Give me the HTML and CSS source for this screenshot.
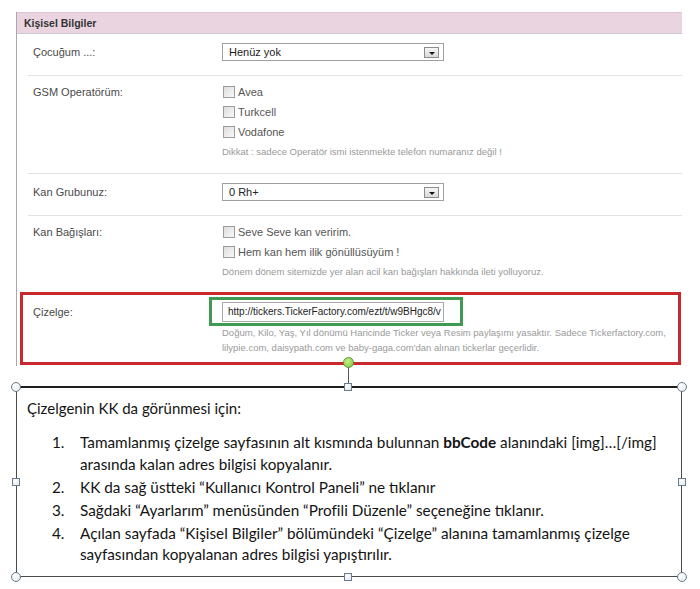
FILE: index.html
```html
<!DOCTYPE html>
<html lang="tr">
<head>
<meta charset="utf-8">
<title>Kişisel Bilgiler</title>
<link rel="stylesheet" href="styles.css">
</head>
<body>
<div class="page">
  <div class="panel">
    <div class="panel-head">Kişisel Bilgiler</div>

    <div class="row">
      <div class="lbl">Çocuğum ...:</div>
      <div class="fld">
        <div class="sel"><span class="sel-text">Henüz yok</span><span class="sel-btn"><i class="tri"></i></span></div>
      </div>
    </div>

    <div class="row multi">
      <div class="lbl">GSM Operatörüm:</div>
      <div class="fld">
        <div class="chk"><span class="box"></span><span>Avea</span></div>
        <div class="chk"><span class="box"></span><span>Turkcell</span></div>
        <div class="chk"><span class="box"></span><span>Vodafone</span></div>
        <div class="note">Dikkat : sadece Operatör ismi istenmekte telefon numaranız değil !</div>
      </div>
    </div>

    <div class="row">
      <div class="lbl">Kan Grubunuz:</div>
      <div class="fld">
        <div class="sel"><span class="sel-text">0 Rh+</span><span class="sel-btn"><i class="tri"></i></span></div>
      </div>
    </div>

    <div class="row multi last">
      <div class="lbl">Kan Bağışları:</div>
      <div class="fld">
        <div class="chk"><span class="box"></span><span>Seve Seve kan veririm.</span></div>
        <div class="chk"><span class="box"></span><span>Hem kan hem ilik gönüllüsüyüm !</span></div>
        <div class="note">Dönem dönem sitemizde yer alan acil kan bağışları hakkında ileti yolluyoruz.</div>
      </div>
    </div>

    <div class="redbox">
      <div class="lbl">Çizelge:</div>
      <div class="fld">
        <div class="inp-wrap">
          <div class="inp">http://tickers.TickerFactory.com/ezt/t/w9BHgc8/v</div>
          <div class="greenbox"></div>
        </div>
        <div class="hint">Doğum, Kilo, Yaş, Yıl dönümü Haricinde Ticker veya Resim paylaşımı yasaktır. Sadece Tickerfactory.com,<br>lilypie.com, daisypath.com ve baby-gaga.com'dan alınan tickerlar geçerlidir.</div>
      </div>
    </div>
  </div>

  <div class="rot-line"></div>
  <div class="rot-knob"></div>

  <div class="textbox">
    <div class="tb-title">Çizelgenin KK da görünmesi için:</div>
    <ol class="steps">
      <li><span class="num">1.</span><span class="txt">Tamamlanmış çizelge sayfasının alt kısmında bulunnan <b>bbCode</b> alanındaki [img]…[/img]<br>arasında kalan adres bilgisi kopyalanır.</span></li>
      <li><span class="num">2.</span><span class="txt">KK da sağ üstteki “Kullanıcı Kontrol Paneli” ne tıklanır</span></li>
      <li><span class="num">3.</span><span class="txt">Sağdaki “Ayarlarım” menüsünden “Profili Düzenle” seçeneğine tıklanır.</span></li>
      <li><span class="num">4.</span><span class="txt">Açılan sayfada “Kişisel Bilgiler” bölümündeki “Çizelge” alanına tamamlanmış çizelge<br>sayfasından kopyalanan adres bilgisi yapıştırılır.</span></li>
    </ol>
    <span class="h circ tl"></span>
    <span class="h circ tr"></span>
    <span class="h circ bl"></span>
    <span class="h circ br"></span>
    <span class="h sq tm"></span>
    <span class="h sq bm"></span>
    <span class="h sq lm"></span>
    <span class="h sq rm"></span>
  </div>
</div>
</body>
</html>
```

FILE: styles.css
```css
* { box-sizing: border-box; }

body {
  margin: 0;
  background: #ffffff;
  font-family: "Liberation Sans", Arial, sans-serif;
  color: #4a4a4a;
}

.page {
  position: relative;
  width: 700px;
  height: 589px;
  overflow: hidden;
}

/* ---------- form panel ---------- */
.panel {
  margin: 12px 0 0 16px;
  width: 666px;
  border-left: 1px solid #a9a9a9;
  padding-bottom: 1px;
}

.panel-head {
  height: 22px;
  background: #e9d4df;
  border-top: 1px solid #dcc5d1;
  border-bottom: 1px solid #c8c8d6;
  font-weight: bold;
  font-size: 10.5px;
  line-height: 20px;
  padding-left: 7px;
  color: #333;
}

.row {
  margin-left: 11px;
  display: grid;
  grid-template-columns: 194px 1fr;
  align-items: start;
  border-bottom: 1px solid #e2e2e2;
  padding: 9px 0 14px 0;
}

.row.multi { padding: 6px 0 11px 0; }
.row.last { border-bottom: none; padding-bottom: 6px; }

.lbl {
  padding-left: 5px;
  font-size: 11px;
  line-height: 18px;
  color: #4a4a4a;
}

.row.multi .lbl { line-height: 20px; }

.sel {
  width: 222px;
  height: 18px;
  border: 1px solid #a0a0a0;
  background: #fff;
  display: flex;
  align-items: center;
  justify-content: space-between;
  padding: 0 4px 0 6px;
}

.sel-text {
  font-size: 11px;
  color: #222;
  line-height: 16px;
}

.sel-btn {
  width: 15px;
  height: 11px;
  border: 1px solid #8c8c8c;
  background: linear-gradient(#f6f6f6, #dadada);
  display: flex;
  align-items: center;
  justify-content: center;
}

.tri {
  display: block;
  width: 0;
  height: 0;
  border-left: 3px solid transparent;
  border-right: 3px solid transparent;
  border-top: 3px solid #111;
  margin-top: 2px;
}

.chk {
  display: flex;
  align-items: center;
  gap: 3px;
  height: 20px;
  font-size: 11px;
  color: #555;
}

.box {
  width: 12px;
  height: 12px;
  margin-left: 1px;
  border: 1px solid #9c9c9c;
  background: linear-gradient(135deg, #dedede, #f8f8f8);
}

.note {
  font-size: 9.5px;
  line-height: 20px;
  color: #999;
  white-space: nowrap;
}

/* ---------- highlighted row ---------- */
.redbox {
  margin: 4px 0 0 3px;
  width: 661px;
  border: 3px solid #c8282e;
  display: grid;
  grid-template-columns: 199px 1fr;
  align-items: start;
  padding: 7px 0 7px 0;
}

.redbox .lbl {
  padding-left: 10px;
  padding-top: 2px;
  line-height: 16px;
}

.inp-wrap {
  position: relative;
  width: 222px;
}

.inp {
  height: 20px;
  width: 222px;
  border: 1px solid #a9a9a9;
  background: #fff;
  font-size: 10px;
  line-height: 18px;
  padding: 0 0 0 5px;
  color: #222;
  white-space: nowrap;
  overflow: hidden;
}

.greenbox {
  position: absolute;
  left: -13px;
  top: -5px;
  width: 254px;
  height: 29px;
  border: 3px solid #3e9b4f;
}

.hint {
  margin-top: 3px;
  font-size: 9.5px;
  line-height: 15px;
  color: #9a9a9a;
  white-space: nowrap;
}

/* ---------- rotation handle ---------- */
.rot-line {
  position: absolute;
  left: 348px;
  top: 367px;
  width: 1px;
  height: 17px;
  background: #555;
}

.rot-knob {
  position: absolute;
  left: 343px;
  top: 357px;
  width: 11px;
  height: 11px;
  border-radius: 50%;
  border: 1px solid #5f9b35;
  background: radial-gradient(circle at 40% 35%, #c6f08a, #7cc43c);
}

/* ---------- text box ---------- */
.textbox {
  position: relative;
  margin: 20px 0 0 16px;
  width: 666px;
  height: 191px;
  border: 1px solid #4a4a4a;
  border-top: 2px solid #1e1e1e;
  padding: 9px 0 0 10px;
  font-family: Lato, "Open Sans", sans-serif;
  color: #141414;
}

.tb-title {
  font-size: 15px;
  line-height: 22px;
}

.steps {
  list-style: none;
  margin: 13px 0 0 0;
  padding: 0;
}

.steps li {
  display: grid;
  grid-template-columns: 25px 28px 1fr;
  font-size: 15.3px;
  line-height: 21.5px;
  margin-bottom: 1.5px;
}

.steps .num { grid-column: 2; }
.steps .txt { grid-column: 3; }

.h {
  position: absolute;
  border: 1px solid #6c7c8c;
  background: radial-gradient(circle at 40% 35%, #ffffff, #dfe6ec);
}

.circ { width: 10px; height: 10px; border-radius: 50%; }
.sq { width: 8px; height: 8px; }

.circ.tl { left: -6px; top: -6px; }
.circ.tr { right: -6px; top: -6px; }
.circ.bl { left: -6px; bottom: -6px; }
.circ.br { right: -6px; bottom: -6px; }

.sq.tm { left: 327px; top: -5px; }
.sq.bm { left: 327px; bottom: -5px; }
.sq.lm { left: -5px; top: 90px; }
.sq.rm { right: -5px; top: 90px; }
```
